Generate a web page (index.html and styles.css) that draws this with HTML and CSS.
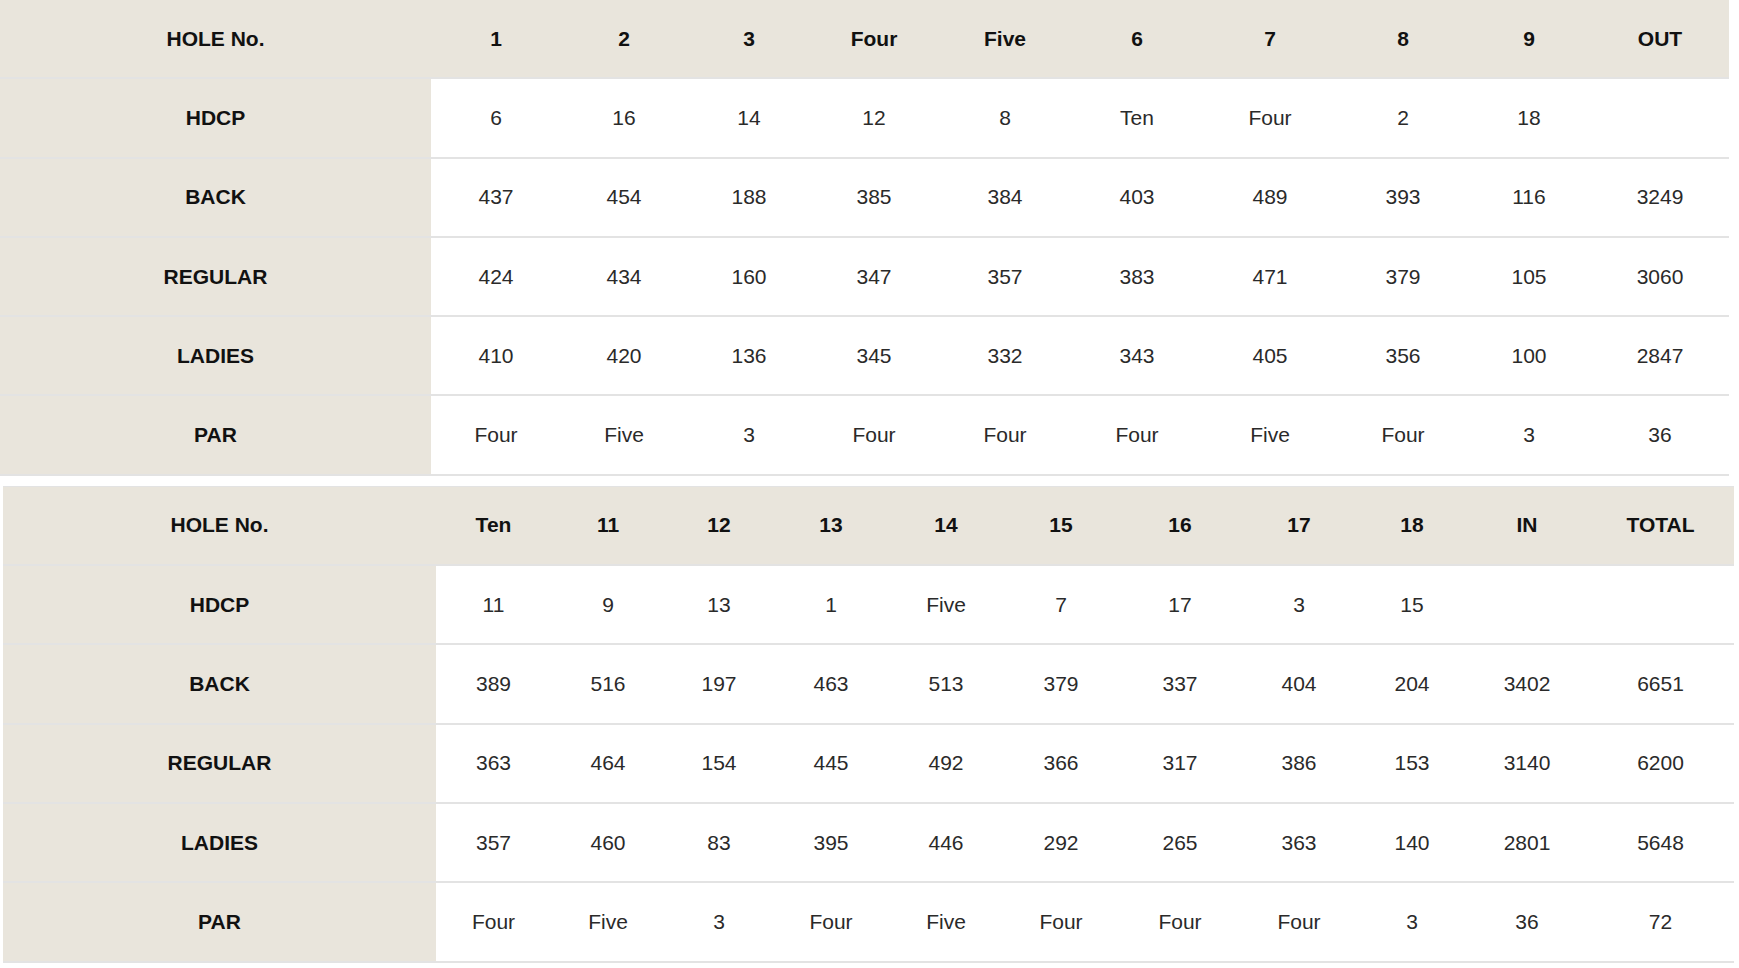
FILE: index.html
```html
<!DOCTYPE html>
<html lang="en">
<head>
    <meta charset="UTF-8">
    <meta name="viewport" content="width=device-width, initial-scale=1.0">
    <title>Course Data</title>
    <link rel="stylesheet" href="styles.css">
</head>
<body>

    <table class="score front">
        <colgroup>
            <col><col><col><col><col><col><col><col><col><col><col>
        </colgroup>
        <thead>
            <tr>
                <th>HOLE No.</th>
                <th>1</th><th>2</th><th>3</th><th>Four</th><th>Five</th>
                <th>6</th><th>7</th><th>8</th><th>9</th><th>OUT</th>
            </tr>
        </thead>
        <tbody>
            <tr>
                <th>HDCP</th>
                <td>6</td><td>16</td><td>14</td><td>12</td><td>8</td>
                <td>Ten</td><td>Four</td><td>2</td><td>18</td><td></td>
            </tr>
            <tr>
                <th>BACK</th>
                <td>437</td><td>454</td><td>188</td><td>385</td><td>384</td>
                <td>403</td><td>489</td><td>393</td><td>116</td><td>3249</td>
            </tr>
            <tr>
                <th>REGULAR</th>
                <td>424</td><td>434</td><td>160</td><td>347</td><td>357</td>
                <td>383</td><td>471</td><td>379</td><td>105</td><td>3060</td>
            </tr>
            <tr>
                <th>LADIES</th>
                <td>410</td><td>420</td><td>136</td><td>345</td><td>332</td>
                <td>343</td><td>405</td><td>356</td><td>100</td><td>2847</td>
            </tr>
            <tr>
                <th>PAR</th>
                <td>Four</td><td>Five</td><td>3</td><td>Four</td><td>Four</td>
                <td>Four</td><td>Five</td><td>Four</td><td>3</td><td>36</td>
            </tr>
        </tbody>
    </table>

    <table class="score back">
        <colgroup>
            <col><col><col><col><col><col><col><col><col><col><col><col>
        </colgroup>
        <thead>
            <tr>
                <th>HOLE No.</th>
                <th>Ten</th><th>11</th><th>12</th><th>13</th><th>14</th>
                <th>15</th><th>16</th><th>17</th><th>18</th><th>IN</th><th>TOTAL</th>
            </tr>
        </thead>
        <tbody>
            <tr>
                <th>HDCP</th>
                <td>11</td><td>9</td><td>13</td><td>1</td><td>Five</td>
                <td>7</td><td>17</td><td>3</td><td>15</td><td></td><td></td>
            </tr>
            <tr>
                <th>BACK</th>
                <td>389</td><td>516</td><td>197</td><td>463</td><td>513</td>
                <td>379</td><td>337</td><td>404</td><td>204</td><td>3402</td><td>6651</td>
            </tr>
            <tr>
                <th>REGULAR</th>
                <td>363</td><td>464</td><td>154</td><td>445</td><td>492</td>
                <td>366</td><td>317</td><td>386</td><td>153</td><td>3140</td><td>6200</td>
            </tr>
            <tr>
                <th>LADIES</th>
                <td>357</td><td>460</td><td>83</td><td>395</td><td>446</td>
                <td>292</td><td>265</td><td>363</td><td>140</td><td>2801</td><td>5648</td>
            </tr>
            <tr>
                <th>PAR</th>
                <td>Four</td><td>Five</td><td>3</td><td>Four</td><td>Five</td>
                <td>Four</td><td>Four</td><td>Four</td><td>3</td><td>36</td><td>72</td>
            </tr>
        </tbody>
    </table>

</body>
</html>
```

FILE: styles.css
```css
body { margin: 0; background: #fff; font-family: "Liberation Sans", Arial, sans-serif; color: #2a2a2a; }

.score { border-collapse: separate; border-spacing: 0; table-layout: fixed; }
.score th, .score td { height: 77.3px; padding: 0; text-align: center; vertical-align: middle; border-bottom: 2px solid #e3e3e3; font-size: 21px; }
.score th { background: #e9e5dc; font-weight: bold; color: #111; }
.score td { background: #fff; font-weight: normal; }

.front { width: 1729px; }
.front col:nth-child(1) { width: 431px; }
.front col:nth-child(2) { width: 130px; }
.front col:nth-child(3) { width: 126px; }
.front col:nth-child(4) { width: 124px; }
.front col:nth-child(5) { width: 126px; }
.front col:nth-child(6) { width: 136px; }
.front col:nth-child(7) { width: 128px; }
.front col:nth-child(8) { width: 138px; }
.front col:nth-child(9) { width: 128px; }
.front col:nth-child(10) { width: 124px; }
.front col:nth-child(11) { width: 138px; }

.back { width: 1731px; margin: 10px 0 0 3px; border-top: 1px solid #e3e3e3; }
.back col:nth-child(1) { width: 433px; }
.back col:nth-child(2) { width: 115px; }
.back col:nth-child(3) { width: 114px; }
.back col:nth-child(4) { width: 108px; }
.back col:nth-child(5) { width: 116px; }
.back col:nth-child(6) { width: 114px; }
.back col:nth-child(7) { width: 116px; }
.back col:nth-child(8) { width: 122px; }
.back col:nth-child(9) { width: 116px; }
.back col:nth-child(10) { width: 110px; }
.back col:nth-child(11) { width: 120px; }
.back col:nth-child(12) { width: 147px; }
```
